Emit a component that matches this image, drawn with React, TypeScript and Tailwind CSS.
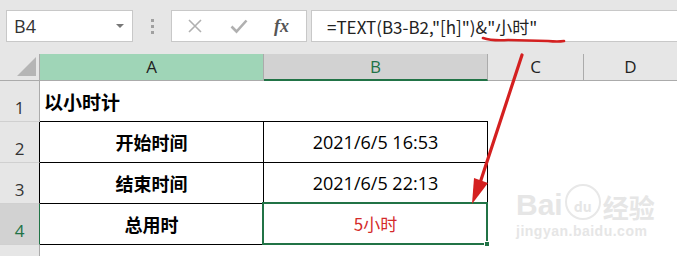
import React from "react";

const F = { fontFamily: '"Noto Sans CJK SC", "Noto Sans", sans-serif' };
const L = { fontFamily: '"Open Sans", "Noto Sans CJK SC", sans-serif' };

function RowHeader({ n, border, selected }: { n: string; border: string; selected?: boolean }) {
  return (
    <div
      className={`w-[40px] h-full flex items-end justify-center pb-[3px] text-[17px] leading-none border-b border-[#d0d0d0] border-r ${border} ${
        selected ? "bg-[#d2d2d2] text-[#217346]" : "bg-[#e6e6e6] text-[#333]"
      }`}
      style={L}
    >
      <span className="pb-[2px]">{n}</span>
    </div>
  );
}

export default function App() {
  return (
    <div className="relative w-[677px] h-[256px] overflow-hidden bg-[#e6e6e6]" style={F}>
      {/* toolbar */}
      <div className="flex h-[54px] items-start pt-[10px] pl-[6px]">
        <div className="w-[127px] h-[32px] bg-white border border-[#c8c8c8] flex items-center pl-[7px] pr-[8px]">
          <span className="text-[18px] text-[#333] leading-none" style={L}>B4</span>
          <span className="ml-auto w-0 h-0 border-l-[4px] border-r-[4px] border-t-[4px] border-l-transparent border-r-transparent border-t-[#777]" />
        </div>
        <div className="w-[38px] h-[32px] flex flex-col items-center justify-center gap-[3px]">
          <span className="w-[3px] h-[3px] bg-[#a0a0a0]" />
          <span className="w-[3px] h-[3px] bg-[#a0a0a0]" />
          <span className="w-[3px] h-[3px] bg-[#a0a0a0]" />
        </div>
        <div className="w-[136px] h-[32px] bg-white border border-[#c8c8c8] flex items-center">
          <svg width="16" height="16" viewBox="0 0 16 16" className="ml-[15px]">
            <path d="M2 2 L14 14 M14 2 L2 14" stroke="#b0b0b0" strokeWidth="1.6" fill="none" />
          </svg>
          <svg width="18" height="16" viewBox="0 0 18 16" className="ml-[27px]">
            <path d="M1.5 8.5 L6.5 13.5 L16.5 2.5" stroke="#b0b0b0" strokeWidth="2.6" fill="none" />
          </svg>
          <span
            className="ml-[26px] text-[18px] italic font-bold text-[#555] leading-none"
            style={{ fontFamily: '"Liberation Serif", serif' }}
          >
            fx
          </span>
        </div>
        <div className="flex-1 ml-[4px] h-[32px] bg-white border border-[#c8c8c8] border-r-0 flex items-center pl-[15px]">
          <span className="text-[17px] text-[#222] leading-none whitespace-nowrap">
            =TEXT(B3-B2,"[h]")&amp;"小时"
          </span>
        </div>
      </div>

      {/* column headers */}
      <div className="flex h-[27px] text-[17px] text-[#222]" style={L}>
        <div className="w-[40px] h-full bg-[#e6e6e6] border-r border-b border-[#ababab] relative">
          <svg className="absolute right-[3px] bottom-[4px]" width="19" height="19" viewBox="0 0 19 19">
            <polygon points="19,0 19,19 0,19" fill="#b5b5b5" />
          </svg>
        </div>
        <div className="w-[224px] h-full bg-[#9fd5b7] border-r border-b border-[#ababab] flex items-center justify-center">
          A
        </div>
        <div className="w-[224px] h-full bg-[#d2d2d2] border-r border-[#ababab] border-b-2 border-b-[#217346] flex items-center justify-center text-[#217346]">
          B
        </div>
        <div className="w-[96px] h-full bg-[#e6e6e6] border-r border-b border-[#ababab] flex items-center justify-center">
          C
        </div>
        <div className="flex-1 h-full bg-[#e6e6e6] border-b border-[#ababab] flex items-center justify-center">
          D
        </div>
      </div>

      {/* rows */}
      <div className="bg-white">
        <div className="flex h-[41px]">
          <RowHeader n="1" border="border-r-[#ababab]" />
          <div className="w-[448px] h-full border-b border-black flex items-center pl-[4px]">
            <span className="text-[19px] font-bold text-black leading-none">以小时计</span>
          </div>
        </div>
        <div className="flex h-[41px]">
          <RowHeader n="2" border="border-r-black" />
          <div className="w-[224px] h-full border-b border-r border-black flex items-center justify-center text-[18px] font-bold text-black">
            开始时间
          </div>
          <div className="w-[224px] h-full border-b border-r border-black flex items-center justify-center text-[18px] text-black" style={L}>
            2021/6/5 16:53
          </div>
        </div>
        <div className="flex h-[41px]">
          <RowHeader n="3" border="border-r-black" />
          <div className="w-[224px] h-full border-b border-r border-black flex items-center justify-center text-[18px] font-bold text-black">
            结束时间
          </div>
          <div className="w-[224px] h-full border-b border-r border-black flex items-center justify-center text-[18px] text-black" style={L}>
            2021/6/5 22:13
          </div>
        </div>
        <div className="flex h-[41px]">
          <RowHeader n="4" border="border-r-[#217346]" selected />
          <div className="w-[224px] h-full border-b border-r border-black flex items-center justify-center text-[18px] font-bold text-black">
            总用时
          </div>
          <div className="relative w-[224px] h-full border-b border-r border-black flex items-center justify-center text-[17px] text-[#d42a2a]">
            5小时
            <div className="absolute -top-[2px] -left-[2px] -right-[1px] -bottom-[1px] border-2 border-[#217346]" />
            <div className="absolute -right-[3px] -bottom-[3px] w-[6px] h-[6px] bg-[#217346] border border-white" />
          </div>
        </div>
        <div className="flex h-[20px]">
          <RowHeader n="" border="border-r-[#ababab]" />
        </div>
      </div>

      {/* watermark */}
      <div className="absolute left-[516px] top-[184px] flex flex-col items-start text-[#e6e6e6] leading-none pointer-events-none">
        <div className="flex items-end">
          <span className="text-[30px] font-bold" style={{ fontFamily: '"Liberation Sans", sans-serif' }}>Bai</span>
          <span className="relative ml-[2px] w-[36px] h-[36px] rounded-full border-2 border-[#e8e8e8] flex items-end justify-center text-[14px] font-bold pb-[5px]">
            du
          </span>
          <span className="ml-[2px] text-[26px] font-bold">经验</span>
        </div>
        <span className="mt-[4px] text-[14px] font-bold tracking-[0.5px]" style={{ fontFamily: '"Liberation Sans", sans-serif' }}>
          jingyan.baidu.com
        </span>
      </div>

      {/* annotations */}
      <svg className="absolute left-0 top-0 pointer-events-none" width="677" height="256" viewBox="0 0 677 256">
        <path d="M483 38 Q492 41 508 40 L548 41 Q558 42 564 41" stroke="#d42020" strokeWidth="2.6" fill="none" strokeLinecap="round" />
        <line x1="522" y1="55" x2="480" y2="183" stroke="#d42020" strokeWidth="3.2" strokeLinecap="round" />
        <polygon points="472,204 474,178 488,183" fill="#d42020" />
      </svg>
    </div>
  );
}
